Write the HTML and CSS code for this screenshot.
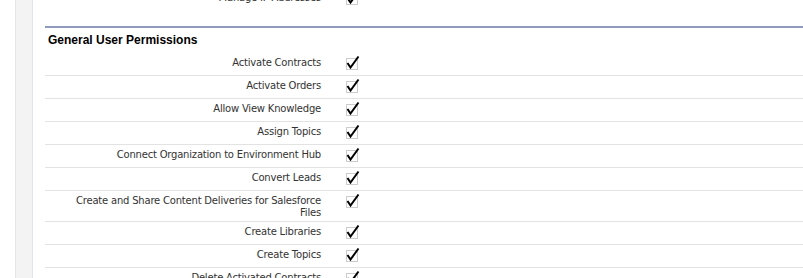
FILE: index.html
```html
<!DOCTYPE html>
<html>
<head>
<meta charset="utf-8">
<link rel="stylesheet" href="styles.css">
</head>
<body>
<div class="page">
  <div class="gutter"></div>
  <div class="main">
    <table class="perm prev">
      <tr><td class="label">Manage IP Addresses</td><td class="data"><svg class="chk" width="16" height="22" viewBox="0 0 16 22"><rect x="0.5" y="5.5" width="11" height="11" fill="none" stroke="#999" stroke-dasharray="1 1"/><path d="M1.5 10 L4.5 14.5 L12.5 3.5" fill="none" stroke="#000" stroke-width="2"/></svg></td><td class="fill"></td></tr>
    </table>
    <div class="section">
      <h3 class="sub">General User Permissions</h3>
      <table class="perm">
        <tr><td class="label">Activate Contracts</td><td class="data"><svg class="chk" width="16" height="22" viewBox="0 0 16 22"><rect x="0.5" y="5.5" width="11" height="11" fill="none" stroke="#999" stroke-dasharray="1 1"/><path d="M1.5 10 L4.5 14.5 L12.5 3.5" fill="none" stroke="#000" stroke-width="2"/></svg></td><td class="fill"></td></tr>
        <tr><td class="label">Activate Orders</td><td class="data"><svg class="chk" width="16" height="22" viewBox="0 0 16 22"><rect x="0.5" y="5.5" width="11" height="11" fill="none" stroke="#999" stroke-dasharray="1 1"/><path d="M1.5 10 L4.5 14.5 L12.5 3.5" fill="none" stroke="#000" stroke-width="2"/></svg></td><td class="fill"></td></tr>
        <tr><td class="label">Allow View Knowledge</td><td class="data"><svg class="chk" width="16" height="22" viewBox="0 0 16 22"><rect x="0.5" y="5.5" width="11" height="11" fill="none" stroke="#999" stroke-dasharray="1 1"/><path d="M1.5 10 L4.5 14.5 L12.5 3.5" fill="none" stroke="#000" stroke-width="2"/></svg></td><td class="fill"></td></tr>
        <tr><td class="label">Assign Topics</td><td class="data"><svg class="chk" width="16" height="22" viewBox="0 0 16 22"><rect x="0.5" y="5.5" width="11" height="11" fill="none" stroke="#999" stroke-dasharray="1 1"/><path d="M1.5 10 L4.5 14.5 L12.5 3.5" fill="none" stroke="#000" stroke-width="2"/></svg></td><td class="fill"></td></tr>
        <tr><td class="label">Connect Organization to Environment Hub</td><td class="data"><svg class="chk" width="16" height="22" viewBox="0 0 16 22"><rect x="0.5" y="5.5" width="11" height="11" fill="none" stroke="#999" stroke-dasharray="1 1"/><path d="M1.5 10 L4.5 14.5 L12.5 3.5" fill="none" stroke="#000" stroke-width="2"/></svg></td><td class="fill"></td></tr>
        <tr><td class="label">Convert Leads</td><td class="data"><svg class="chk" width="16" height="22" viewBox="0 0 16 22"><rect x="0.5" y="5.5" width="11" height="11" fill="none" stroke="#999" stroke-dasharray="1 1"/><path d="M1.5 10 L4.5 14.5 L12.5 3.5" fill="none" stroke="#000" stroke-width="2"/></svg></td><td class="fill"></td></tr>
        <tr><td class="label">Create and Share Content Deliveries for Salesforce Files</td><td class="data"><svg class="chk" width="16" height="22" viewBox="0 0 16 22"><rect x="0.5" y="5.5" width="11" height="11" fill="none" stroke="#999" stroke-dasharray="1 1"/><path d="M1.5 10 L4.5 14.5 L12.5 3.5" fill="none" stroke="#000" stroke-width="2"/></svg></td><td class="fill"></td></tr>
        <tr><td class="label">Create Libraries</td><td class="data"><svg class="chk" width="16" height="22" viewBox="0 0 16 22"><rect x="0.5" y="5.5" width="11" height="11" fill="none" stroke="#999" stroke-dasharray="1 1"/><path d="M1.5 10 L4.5 14.5 L12.5 3.5" fill="none" stroke="#000" stroke-width="2"/></svg></td><td class="fill"></td></tr>
        <tr><td class="label">Create Topics</td><td class="data"><svg class="chk" width="16" height="22" viewBox="0 0 16 22"><rect x="0.5" y="5.5" width="11" height="11" fill="none" stroke="#999" stroke-dasharray="1 1"/><path d="M1.5 10 L4.5 14.5 L12.5 3.5" fill="none" stroke="#000" stroke-width="2"/></svg></td><td class="fill"></td></tr>
        <tr><td class="label">Delete Activated Contracts</td><td class="data"><svg class="chk" width="16" height="22" viewBox="0 0 16 22"><rect x="0.5" y="5.5" width="11" height="11" fill="none" stroke="#999" stroke-dasharray="1 1"/><path d="M1.5 10 L4.5 14.5 L12.5 3.5" fill="none" stroke="#000" stroke-width="2"/></svg></td><td class="fill"></td></tr>
      </table>
    </div>
  </div>
</div>
</body>
</html>
```
FILE: styles.css
```css
html, body {
  margin: 0;
  padding: 0;
  background: #ffffff;
  overflow: hidden;
}
.page {
  display: flex;
  height: 278px;
  padding-left: 15px;
  overflow: hidden;
}
.gutter {
  width: 16px;
  flex: none;
  background: #f3f3f3;
  border-left: 1px solid #e6e6e6;
  border-right: 1px solid #e3e3ec;
}
.main {
  flex: 1;
  padding-left: 12px;
  margin-top: -12px;
}
.perm {
  width: 100%;
  border-collapse: collapse;
  font-family: "DejaVu Sans", Verdana, sans-serif;
  font-size: 10px;
  letter-spacing: -0.2px;
  color: #333333;
}
.perm td {
  border-bottom: 1px solid #e3e3e3;
  vertical-align: top;
  padding: 0;
  line-height: 12px;
}
.perm .label {
  width: 266px;
  text-align: right;
  padding: 4px 12px 2px 10px;
}
.perm .data {
  width: 40px;
  height: 22px;
  padding-left: 13px;
}
.perm.prev td {
  border-bottom: none;
}
.perm.prev .label {
  height: 32px;
}
.perm.prev .data {
  height: 38px;
}
.chk {
  display: block;
}
.section {
  border-top: 2px solid #8e9bbd;
}
.sub {
  margin: 0;
  padding: 5px 0 6px 3px;
  font-family: "Liberation Sans", Arial, sans-serif;
  font-size: 12px;
  font-weight: bold;
  color: #000000;
  line-height: 14px;
}
```
